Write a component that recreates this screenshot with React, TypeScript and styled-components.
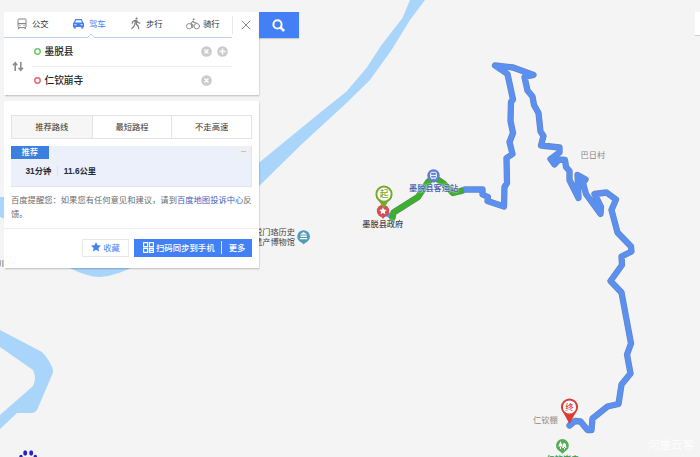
import React from "react";
import styled, { createGlobalStyle, css } from "styled-components";

const BLUE = "#4480f5";

const GlobalStyle = createGlobalStyle`
  * { box-sizing: border-box; }
  html, body { margin: 0; padding: 0; overflow: hidden; background: #f4f4f4; }
  body { font-family: "Liberation Sans", "Noto Sans CJK SC", sans-serif; color: #333; }
  button { margin: 0; padding: 0; border: 0; background: none; font: inherit; color: inherit; }
  svg { display: block; flex: none; }
`;

const Screen = styled.main`
  position: relative;
  width: 700px;
  height: 457px;
  overflow: hidden;
  background: #f4f4f4;
`;

const MapCanvas = styled.svg`
  position: absolute;
  inset: 0;
`;

const MapLabel = styled.span<{ $x: number; $y: number; $color?: string; $size?: number; $weight?: number; $halo?: string }>`
  position: absolute;
  left: ${(p) => p.$x}px;
  top: ${(p) => p.$y}px;
  color: ${(p) => p.$color ?? "#444"};
  font-size: ${(p) => p.$size ?? 8.2}px;
  font-weight: ${(p) => p.$weight ?? 400};
  line-height: 10px;
  white-space: pre;
  text-shadow: ${(p) => (p.$halo ? `0 0 1px ${p.$halo}, 0 0 2px ${p.$halo}` : "none")};
`;

const Overlay = styled.div`
  position: relative;
  display: flex;
  flex-direction: column;
  align-items: flex-start;
  gap: 6px;
  padding: 12px 0 0 4px;
`;

const SearchRow = styled.div`
  display: flex;
  align-items: flex-start;
`;

const cardStyle = css`
  width: 255px;
  background: #fff;
  box-shadow: 0.5px 1px 1.5px rgba(0, 0, 0, 0.28);
`;

const SearchCard = styled.section`
  ${cardStyle}
  height: 83px;
  display: grid;
  grid-template-columns: 228px 27px;
`;

const Tabs = styled.nav`
  display: flex;
  height: 26px;
  border-bottom: 1px solid #bfd0ef;
`;

const Tab = styled.button<{ $active?: boolean }>`
  position: relative;
  display: flex;
  align-items: center;
  gap: 4px;
  width: 57.5px;
  padding: 0 0 2px 11px;
  font-size: 8.4px;
  line-height: 12px;
  white-space: nowrap;
  color: ${(p) => (p.$active ? BLUE : "#333")};
`;

const TabIcon = styled.span`
  display: flex;
  justify-content: center;
  width: 13px;
`;

const Notch = styled.svg`
  position: absolute;
  left: 26px;
  bottom: -1px;
`;

const Form = styled.div`
  display: grid;
  grid-template-columns: 28px 1fr;
  height: 57px;
`;

const Swap = styled.div`
  display: flex;
  align-items: center;
  justify-content: center;
`;

const Stop = styled.div<{ $divided?: boolean }>`
  display: flex;
  align-items: center;
  height: 28.5px;
  border-bottom: ${(p) => (p.$divided ? "1px solid #edf0f2" : "0")};
`;

const Ring = styled.svg`
  margin: 0 4px 0 1.5px;
`;

const StopName = styled.span`
  width: 156px;
  font-size: 9.7px;
  line-height: 14px;
  font-weight: 500;
  color: #222;
`;

const StopActions = styled.div`
  display: flex;
  gap: 5px;
`;

const CloseButton = styled.button`
  display: flex;
  align-items: center;
  justify-content: center;
  height: 18px;
  margin-top: 4px;
  border-left: 1px solid #e8e8e8;
`;

const SearchButton = styled.button`
  display: flex;
  align-items: center;
  justify-content: center;
  width: 39.5px;
  height: 26px;
  background: ${BLUE};
  box-shadow: 0 1px 1px rgba(0, 0, 0, 0.16);
`;

const ResultCard = styled.section`
  ${cardStyle}
  height: 167px;
  padding: 14px 0 0;
`;

const PlanTabs = styled.div`
  display: grid;
  grid-template-columns: repeat(3, 1fr);
  height: 24px;
  margin: 0 7px;
  border: 1px solid #e3e3e3;
`;

const PlanTab = styled.button<{ $active?: boolean }>`
  font-size: 8.3px;
  line-height: 22px;
  background: ${(p) => (p.$active ? "#f6f6f6" : "#fff")};
  & + & { border-left: 1px solid #e3e3e3; }
`;

const Plan = styled.div`
  display: grid;
  grid-template-columns: 1fr 15px;
  grid-template-rows: 13.5px 1fr;
  height: 41px;
  margin: 6.5px 7px 0;
  background: #ebf0fa;
  border: 1px solid #dfe5ee;
  border-width: 0 1px 1px 0;
`;

const PlanBadge = styled.span`
  width: 37.5px;
  background: #3b7fdf;
  color: #fff;
  font-size: 8.3px;
  font-weight: 500;
  line-height: 13.5px;
  text-align: center;
`;

const CollapseMark = styled.i`
  width: 15px;
  height: 13px;
  background: #edf0f5;
  &::after {
    content: "";
    display: block;
    width: 5px;
    height: 1px;
    margin: 5.5px 0 0 5px;
    background: #bcc3ce;
  }
`;

const PlanFacts = styled.div`
  display: flex;
  align-items: center;
  padding: 0 0 2px 14.5px;
  font-size: 8.3px;
  font-weight: 700;
  white-space: nowrap;
  color: #222b38;
`;

const Fact = styled.span`
  line-height: 10px;
  & + & { margin-left: 5.5px; padding-left: 6px; border-left: 1px solid #dbe1eb; }
`;

const Notice = styled.p`
  width: 243px;
  height: 35px;
  margin: 6px 0 0 7px;
  font-size: 8.3px;
  line-height: 14.5px;
  color: #6c6c6c;
  word-break: break-all;
`;

const NoticeLink = styled.span`
  color: #3d5fc0;
`;

const Footer = styled.footer`
  display: flex;
  justify-content: flex-end;
  gap: 5px;
  padding: 10px 7px 0 0;
  border-top: 1px solid #ededed;
`;

const SaveButton = styled.button`
  display: flex;
  align-items: center;
  justify-content: center;
  gap: 2px;
  width: 47px;
  height: 18.5px;
  padding-bottom: 1px;
  border: 1px solid #e7e7e7;
  font-size: 8.3px;
  color: ${BLUE};
`;

const SendGroup = styled.div`
  display: flex;
  align-items: center;
  width: 118px;
  height: 18.5px;
  background: ${BLUE};
  color: #fff;
  font-size: 8.4px;
  font-weight: 500;
`;

const SendButton = styled.button`
  display: flex;
  align-items: center;
  gap: 2px;
  width: 88px;
  height: 13px;
  padding: 0 0 1px 9px;
  white-space: nowrap;
  border-right: 1px solid #d9e5ff;
`;

const MoreButton = styled.button`
  flex: 1;
  padding-bottom: 1px;
`;

const BusIcon = () => (
  <svg width="10" height="12" viewBox="0 0 10 12" fill="none" stroke="#858585">
    <rect x="1" y="1" width="8" height="8.6" rx=".8" />
    <path d="M1 5.7h8M1.7 9.5v1.8m6.6-1.8v1.8" strokeWidth="1.3" />
    <path d="M2.3 7.7h1.3m2.8 0h1.3" strokeWidth=".9" />
  </svg>
);

const CarIcon = () => (
  <svg width="11" height="10" viewBox="0 0 11 10" fill={BLUE}>
    <path d="M2.2 0h6.6L10 3.3l1 .8v3.8h-.7v1.6H8.2V7.9H2.8v1.6H.7V7.9H0V4.1l1-.8zM3 1.2l-.8 2.3h6.6L8 1.2z" />
    <path d="M1.4 5.2h2v1h-2zm6.2 0h2v1h-2z" fill="#fff" />
  </svg>
);

const WalkIcon = () => (
  <svg width="12" height="13" viewBox="0 0 12 13" fill="none" stroke="#777" strokeWidth="1.15" strokeLinecap="round" strokeLinejoin="round">
    <circle cx="6.6" cy="1.5" r="1.1" fill="#777" stroke="none" />
    <path d="M2.2 6.2 3.1 4.2 5.5 3.4l1.4.3L8 5.5l1.8.6M5.4 3.8 4.8 7.2 3.9 9.4 1.8 11.7M6.8 4 6.2 7l1.9 2 .6 2.7" />
  </svg>
);

const BikeIcon = () => (
  <svg width="14" height="12" viewBox="0 0 14 12" fill="none" stroke="#858585" strokeWidth=".9" strokeLinejoin="round" strokeLinecap="round">
    <circle cx="3.2" cy="8.2" r="2.7" />
    <circle cx="10.8" cy="8.2" r="2.7" />
    <circle cx="7.6" cy="1.2" r=".9" fill="#858585" stroke="none" />
    <path d="M6.7 9.5 7 7.2 4.9 5.6 7 3 8.2 4.8h2" strokeWidth="1.1" />
  </svg>
);

const StopRing = ({ color }: { color: string }) => (
  <Ring width="7" height="7" viewBox="0 0 7 7">
    <circle cx="3.5" cy="3.5" r="2.7" fill="none" stroke={color} strokeWidth="1.5" />
  </Ring>
);

const RoundAction = ({ plus = false }: { plus?: boolean }) => (
  <svg width="11" height="11" viewBox="0 0 11 11">
    <circle cx="5.5" cy="5.5" r="5.3" fill="#cbcbcb" />
    <path d={plus ? "M5.5 2.5v6M2.5 5.5h6" : "M3.5 3.5l4 4m0-4l-4 4"} stroke="#fff" strokeWidth="1.5" />
  </svg>
);

const ROUTE =
  "M461 191 465 189.5H482.5L482.5 194.5 488 197 487.5 201 504 206.5 504.5 187 507 183 506.5 158 512.5 154 509.5 142 513 133 510.5 121 511 102 513 99.5 507.5 74 495 65.5 513 67.5 533.5 75 524.5 77 527.5 90.5 532.5 96.5 534 105 538.5 113 540.5 131.5 543.5 136 541 145.5 559.5 147.5 559.5 152.5 550.5 159 554.5 164.5 559 159.5 565 160 566 167 569.5 171 569.5 180 578.5 198 577.5 175 585.5 179.5 583 183 586 194 600.5 214 601 207 594.5 194 606.5 192.5 616 199.5 611.5 210 617.5 232.5 631 246.5 631.5 251.5 621.5 256.5 622 265 610.5 281 621.5 292.5 631 343.5 627 354.5 630.5 373.5 621.5 384.5 618.5 404 607.5 406.5 592.5 418.5 591.5 430H587.5L580.5 421.5 575 421 569.5 425.5";

const WALKED = "M392.5 218 393.5 212.5 418 197 428 182 434 177 443 183 453 193 461 191";

const MapLayer = () => (
  <MapCanvas width="700" height="457" viewBox="0 0 700 457" fill="none">
    <g fill="#a9d5fb">
      <path d="M410 0 402.5 18 381.5 45 366.5 68 346.5 91.5 321.5 111.5 250 170V195L303 143 346.5 103 370 80 391.5 50 410 20 425 0z" />
      <path d="M0 330 42 352Q48 358 52 367 54 371 52 375L37 410Q35 413 31 413H17L0 429V415L33 386Q37 378 33 370L0 347z" />
      <path d="M0 197H8V220L0 217zM60 263Q85 277 100 277 118 276 140 263z" />
    </g>
    <g strokeLinecap="round" strokeLinejoin="round">
      <path d={ROUTE} stroke="#6686bd" strokeWidth="6.3" />
      <path d={ROUTE} stroke="#5b8ff0" strokeWidth="5.2" />
      <path d="M384 212 392 217" stroke="#5b8ff0" strokeWidth="5" />
      <path d={WALKED} stroke="#4a9a43" strokeWidth="6.3" />
      <path d={WALKED} stroke="#3ead32" strokeWidth="5.3" />
    </g>

    <path d="M434 183 430.3 179.5h7.4z" fill="#5d7ed2" />
    <circle cx="433.5" cy="175.5" r="6.2" fill="#5d7ed2" />
    <rect x="430.7" y="172.3" width="5.6" height="5.7" rx="1" stroke="#fff" />
    <path d="M431 175.4h5M432 178v1.3m3-1.3v1.3" stroke="#fff" />

    <path d="M383 219 380 215h6z" fill="#d94c58" />
    <circle cx="383" cy="211" r="6.2" fill="#d94c58" />
    <path d="m383 207.2 1.1 2.4 2.6.3-1.9 1.8.5 2.6-2.3-1.3-2.3 1.3.5-2.6-1.9-1.8 2.6-.3z" fill="#fff" />
    <path d="M378 200 384 208.5 389 200z" fill="#76a82d" />
    <circle cx="384" cy="194.2" r="7.6" fill="#fff" stroke="#76a82d" strokeWidth="2" />

    <path d="M563.5 413 569.5 424 575.5 413z" fill="#d83d37" />
    <circle cx="569.5" cy="407" r="7.6" fill="#fff" stroke="#d83d37" strokeWidth="2" />

    <path d="M558 449 562.5 454 567 449z" fill="#55ad58" />
    <circle cx="562.4" cy="445.5" r="6.4" fill="#55ad58" />
    <path d="M560.5 441 558.3 446.5h4.4zM564.3 443 562 448h4.7zM560 446h1v3h-1zM564 447h1v2.5h-1z" fill="#fff" />
    <circle cx="564.3" cy="445" r="1.8" fill="#fff" />

    <path d="M300.5 241 303.6 244.5 307 241z" fill="#4f9db4" />
    <circle cx="303.6" cy="236.5" r="6.3" fill="#4f9db4" />
    <path d="m300 234.5 3.6-2.4 3.6 2.4zM300.5 235.5h6.2v1.5h-6.2zM300 238h7.2v1.3H300z" fill="#fff" />

    <g fill="#2b20c2">
      <ellipse cx="25.2" cy="453" rx="2" ry="2.7" />
      <ellipse cx="31.2" cy="453" rx="2" ry="2.7" />
      <ellipse cx="21" cy="457.2" rx="1.8" ry="2.4" />
      <ellipse cx="35.3" cy="457.2" rx="1.8" ry="2.4" />
    </g>
    <path d="M695 12h5v23h-5z" fill="#fff" />
    <path d="M695 35.5h5" stroke="#ccc" />
  </MapCanvas>
);

const MapLabels = () => (
  <>
    <MapLabel $x={409} $y={184} $color="#4659a8" $weight={500} $halo="#f4f6ff">墨脱县客运站</MapLabel>
    <MapLabel $x={362.3} $y={219.5} $weight={500} $halo="#fff">墨脱县政府</MapLabel>
    <MapLabel $x={580.5} $y={151} $color="#888">巴日村</MapLabel>
    <MapLabel $x={533} $y={416} $color="#888">仁钦棚</MapLabel>
    <MapLabel $x={546.5} $y={454.5} $color="#389443" $weight={500}>仁钦崩寺</MapLabel>
    <MapLabel $x={254} $y={227.5}>脱门珞历史</MapLabel>
    <MapLabel $x={254} $y={237.5}>遗产博物馆</MapLabel>
    <MapLabel $x={-4} $y={259} $size={8}>川</MapLabel>
    <MapLabel $x={379.7} $y={189.3} $color="#76a82d" $size={8.6} $weight={500}>起</MapLabel>
    <MapLabel $x={565.3} $y={402} $color="#d83d37" $size={8.4} $weight={500}>终</MapLabel>
    <MapLabel $x={648} $y={440} $color="#fdfdfd" $size={11.5}>河崖云客</MapLabel>
  </>
);

export default function App() {
  return (
    <Screen>
      <GlobalStyle />
      <MapLayer />
      <MapLabels />
      <Overlay>
        <SearchRow>
          <SearchCard>
            <div>
              <Tabs>
                <Tab><TabIcon><BusIcon /></TabIcon>公交</Tab>
                <Tab $active>
                  <TabIcon><CarIcon /></TabIcon>驾车
                  <Notch width="8" height="5" viewBox="0 0 8 5">
                    <path d="M0 4.5 4 .7 8 4.5V5H0z" fill="#fff" />
                    <path d="M0 4.5h.5L4 1l3.5 3.5H8" fill="none" stroke="#bfd0ef" />
                  </Notch>
                </Tab>
                <Tab><TabIcon><WalkIcon /></TabIcon>步行</Tab>
                <Tab><TabIcon><BikeIcon /></TabIcon>骑行</Tab>
              </Tabs>
              <Form>
                <Swap>
                  <svg width="12" height="11" viewBox="0 0 12 11" fill="none" stroke="#8c8c8c" strokeWidth="1.6">
                    <path d="M3.2 10V2M1 4.2 3.2 1.8 5.2 4.2M8.8 1v8M6.6 6.8l2.2 2.4 2.2-2.4" />
                  </svg>
                </Swap>
                <div>
                  <Stop $divided>
                    <StopRing color="#6bcb64" />
                    <StopName>墨脱县</StopName>
                    <StopActions><RoundAction /><RoundAction plus /></StopActions>
                  </Stop>
                  <Stop>
                    <StopRing color="#e06876" />
                    <StopName>仁钦崩寺</StopName>
                    <StopActions><RoundAction /></StopActions>
                  </Stop>
                </div>
              </Form>
            </div>
            <CloseButton aria-label="关闭">
              <svg width="10" height="10" viewBox="0 0 10 10" stroke="#777" strokeWidth=".9">
                <path d="m.8.8 8.4 8.4m0-8.4L.8 9.2" />
              </svg>
            </CloseButton>
          </SearchCard>
          <SearchButton aria-label="搜索">
            <svg width="13" height="13" viewBox="0 0 13 13" fill="none" stroke="#fff" strokeWidth="2">
              <circle cx="5.5" cy="5.4" r="4.1" />
              <path d="m8.5 8.4 3.6 3.6" strokeWidth="2.5" />
            </svg>
          </SearchButton>
        </SearchRow>
        <ResultCard>
          <PlanTabs>
            <PlanTab $active>推荐路线</PlanTab>
            <PlanTab>最短路程</PlanTab>
            <PlanTab>不走高速</PlanTab>
          </PlanTabs>
          <Plan>
            <PlanBadge>推荐</PlanBadge>
            <CollapseMark />
            <PlanFacts>
              <Fact>31分钟</Fact>
              <Fact>11.6公里</Fact>
            </PlanFacts>
          </Plan>
          <Notice>
            百度提醒您：如果您有任何意见和建议，请到<NoticeLink>百度地图投诉中心</NoticeLink>反馈。
          </Notice>
          <Footer>
            <SaveButton>
              <svg width="10" height="10" viewBox="0 0 10 10" fill={BLUE}>
                <path d="m5 0 1.5 3.2 3.5.4-2.6 2.4.7 3.5L5 7.8 1.9 9.5 2.6 6 0 3.6l3.5-.4z" />
              </svg>
              收藏
            </SaveButton>
            <SendGroup>
              <SendButton>
                <svg width="11" height="11" viewBox="0 0 11 11" fill="none" stroke="#fff" strokeWidth="1.1">
                  <path d="M.6.6h4v4h-4zM6.4.6h4v4h-4zM.6 6.4h4v4h-4zM6.4 6.4h4v4h-4zM6.4 8.4h4" />
                </svg>
                扫码同步到手机
              </SendButton>
              <MoreButton>更多</MoreButton>
            </SendGroup>
          </Footer>
        </ResultCard>
      </Overlay>
    </Screen>
  );
}
